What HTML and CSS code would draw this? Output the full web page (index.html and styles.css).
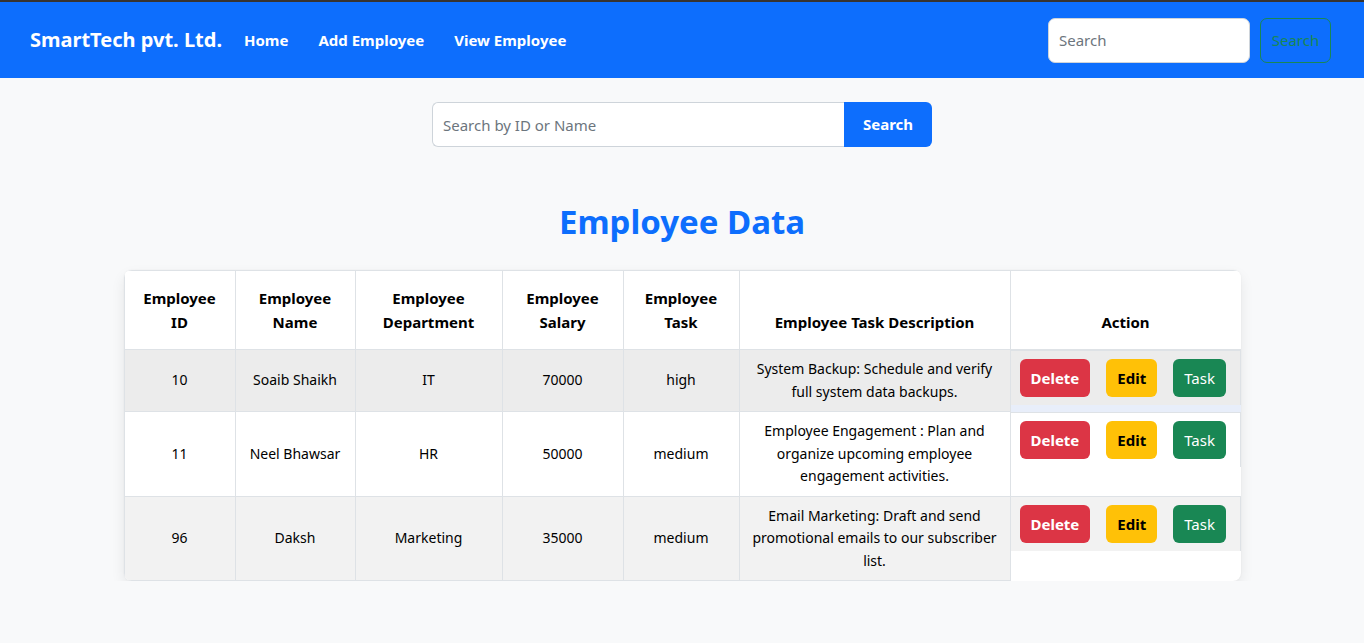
FILE: index.html
```html
<!DOCTYPE html>
<html lang="en">
<head>
<meta charset="utf-8">
<title>Employee Data</title>
<link rel="stylesheet" href="styles.css">
</head>
<body>
<nav class="navbar">
  <a class="brand" href="#">SmartTech pvt. Ltd.</a>
  <ul class="nav-links">
    <li><a href="#">Home</a></li>
    <li><a href="#">Add Employee</a></li>
    <li><a href="#">View Employee</a></li>
  </ul>
  <form class="nav-search">
    <input class="nav-input" type="text" placeholder="Search">
    <button class="nav-btn" type="button">Search</button>
  </form>
</nav>

<main class="content">
  <form class="search-group">
    <input class="search-input" type="text" placeholder="Search by ID or Name">
    <button class="search-btn" type="button">Search</button>
  </form>

  <h2 class="title">Employee Data</h2>

  <div class="table-wrap">
    <table class="emp-table">
      <colgroup>
        <col class="c1"><col class="c2"><col class="c3"><col class="c4"><col class="c5"><col class="c6"><col class="c7">
      </colgroup>
      <thead>
        <tr>
          <th>Employee ID</th>
          <th>Employee Name</th>
          <th>Employee Department</th>
          <th>Employee Salary</th>
          <th>Employee Task</th>
          <th>Employee Task Description</th>
          <th>Action</th>
        </tr>
      </thead>
      <tbody>
        <tr class="row-hover">
          <td>10</td>
          <td>Soaib Shaikh</td>
          <td>IT</td>
          <td>70000</td>
          <td>high</td>
          <td>System Backup: Schedule and verify full system data backups.</td>
          <td class="actions">
            <button class="btn btn-delete" type="button">Delete</button>
            <button class="btn btn-edit" type="button">Edit</button>
            <button class="btn btn-task" type="button">Task</button>
          </td>
        </tr>
        <tr class="row-plain">
          <td>11</td>
          <td>Neel Bhawsar</td>
          <td>HR</td>
          <td>50000</td>
          <td>medium</td>
          <td>Employee Engagement : Plan and organize upcoming employee engagement activities.</td>
          <td class="actions">
            <button class="btn btn-delete" type="button">Delete</button>
            <button class="btn btn-edit" type="button">Edit</button>
            <button class="btn btn-task" type="button">Task</button>
          </td>
        </tr>
        <tr class="row-striped">
          <td>96</td>
          <td>Daksh</td>
          <td>Marketing</td>
          <td>35000</td>
          <td>medium</td>
          <td>Email Marketing: Draft and send promotional emails to our subscriber list.</td>
          <td class="actions">
            <button class="btn btn-delete" type="button">Delete</button>
            <button class="btn btn-edit" type="button">Edit</button>
            <button class="btn btn-task" type="button">Task</button>
          </td>
        </tr>
      </tbody>
    </table>
  </div>
</main>
</body>
</html>
```

FILE: styles.css
```css
* { box-sizing: border-box; }

html, body {
  margin: 0;
  padding: 0;
}

body {
  background: #f8f9fa;
  font-family: "Noto Sans", "Open Sans", sans-serif;
  font-size: 15px;
  line-height: 1.5;
  color: #212529;
}

/* Navbar */
.navbar {
  display: flex;
  align-items: center;
  height: 78px;
  background: #0d6efd;
  border-top: 2px solid #37332f;
  padding: 0 33px 0 30px;
}

.brand {
  color: #fff;
  text-decoration: none;
  font-size: 20px;
  font-weight: 700;
  margin-right: 7px;
}

.nav-links {
  display: flex;
  list-style: none;
  margin: 0;
  padding: 0;
}

.nav-links a {
  display: block;
  padding: 0 15px;
  color: #fff;
  text-decoration: none;
  font-weight: 700;
  font-size: 15px;
}

.nav-search {
  margin-left: auto;
  display: flex;
  gap: 10px;
}

.nav-input {
  width: 202px;
  height: 45px;
  border: 1px solid #ced4da;
  border-radius: 7px;
  padding: 0 10px;
  font: inherit;
  color: #212529;
  background: #fff;
}

.nav-input::placeholder { color: #6c757d; }

.nav-btn {
  width: 71px;
  height: 45px;
  border: 1px solid #198754;
  border-radius: 7px;
  background: transparent;
  color: #198754;
  font: inherit;
  padding: 0;
}

/* Content */
.content {
  padding-top: 24px;
}

.search-group {
  display: flex;
  width: 500px;
  margin: 0 auto;
}

.search-input {
  flex: 1;
  height: 45px;
  border: 1px solid #ced4da;
  border-right: none;
  border-radius: 6px 0 0 6px;
  padding: 0 10px;
  font: inherit;
  background: #fff;
}

.search-input::placeholder { color: #6c757d; }

.search-btn {
  width: 88px;
  height: 45px;
  border: none;
  border-radius: 0 6px 6px 0;
  background: #0d6efd;
  color: #fff;
  font: inherit;
  font-weight: 700;
}

.title {
  margin: 51px 0 24px;
  text-align: center;
  color: #0d6efd;
  font-size: 33px;
  line-height: 48px;
  font-weight: 700;
}

/* Table */
.table-wrap {
  width: 1117px;
  margin: 0 auto;
  background: #fff;
  border-radius: 8px;
  overflow: hidden;
  box-shadow: 0 6px 14px rgba(0, 0, 0, 0.08), 0 0 2px rgba(0, 0, 0, 0.05);
}

.emp-table {
  width: 100%;
  border-collapse: collapse;
  table-layout: fixed;
  text-align: center;
  color: #000;
}

.c1 { width: 111px; }
.c2 { width: 120px; }
.c3 { width: 147px; }
.c4 { width: 121px; }
.c5 { width: 116px; }
.c6 { width: 271px; }
.c7 { width: 231px; }

.emp-table th {
  padding: 15px 15px;
  vertical-align: bottom;
  font-weight: 700;
  font-size: 15px;
  line-height: 24px;
  border: 1px solid #dee2e6;
  background: #fff;
}

.emp-table td {
  padding: 8px;
  vertical-align: middle;
  font-size: 14px;
  line-height: 22.5px;
  border: 1px solid #dee2e6;
}

.row-hover { background: #e8eefa; }
.row-hover td { background: #ececec; }
.row-plain td { background: #fff; }
.row-striped td { background: #f2f2f2; }

.emp-table td.actions {
  display: flex;
  gap: 16px;
  padding: 8px 8px 8px 9px;
  border-left: none;
  border-bottom: none;
}

.btn {
  height: 38px;
  padding: 0 11px;
  border: none;
  border-radius: 6px;
  font-family: inherit;
  font-size: 15px;
}

.btn-delete { background: #dc3545; color: #fff; font-weight: 700; }
.btn-edit { background: #ffc107; color: #000; font-weight: 700; }
.btn-task { background: #198754; color: #fff; font-weight: 400; }
```
